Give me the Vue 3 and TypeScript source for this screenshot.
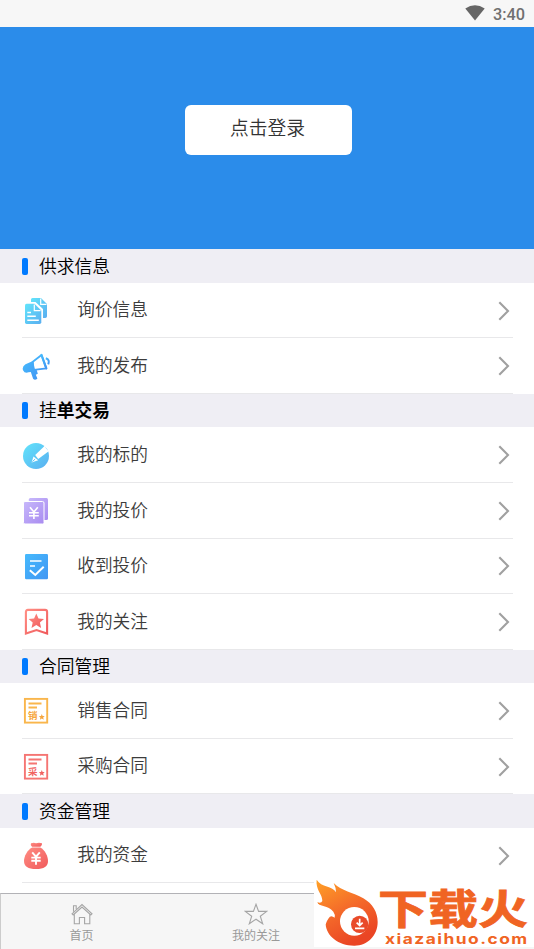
<script setup lang="ts">
type Icon =
  | 'docs' | 'horn' | 'pen' | 'bid' | 'check' | 'mark' | 'sale' | 'buy' | 'bag'

interface Row {
  icon: Icon
  label: string
}

interface Section {
  light: string
  bold?: string
  rows: Row[]
}

const sections: Section[] = [
  {
    light: '供求信息',
    rows: [
      { icon: 'docs', label: '询价信息' },
      { icon: 'horn', label: '我的发布' },
    ],
  },
  {
    light: '挂',
    bold: '单交易',
    rows: [
      { icon: 'pen', label: '我的标的' },
      { icon: 'bid', label: '我的投价' },
      { icon: 'check', label: '收到投价' },
      { icon: 'mark', label: '我的关注' },
    ],
  },
  {
    light: '合同管理',
    rows: [
      { icon: 'sale', label: '销售合同' },
      { icon: 'buy', label: '采购合同' },
    ],
  },
  {
    light: '资金管理',
    rows: [{ icon: 'bag', label: '我的资金' }],
  },
]
</script>

<template>
  <div class="screen">
    <svg class="defs" width="0" height="0">
      <defs>
        <linearGradient id="cyan" x1="0" y1="0" x2="1" y2="1">
          <stop offset="0" stop-color="#62e4fb" /><stop offset="1" stop-color="#5aaef0" />
        </linearGradient>
        <linearGradient id="blue" x1="0" y1="0" x2="1" y2="1">
          <stop offset="0" stop-color="#45bafd" /><stop offset="1" stop-color="#4296f3" />
        </linearGradient>
        <linearGradient id="violet" x1="0" y1="0" x2="1" y2="1">
          <stop offset="0" stop-color="#c7b8fb" /><stop offset="1" stop-color="#a98bf0" />
        </linearGradient>
        <linearGradient id="red" x1="0" y1="0" x2="1" y2="1">
          <stop offset="0" stop-color="#ff8d83" /><stop offset="1" stop-color="#f05a5c" />
        </linearGradient>
        <linearGradient id="fire" x1="0" y1="0" x2="0.5" y2="1">
          <stop offset="0" stop-color="#ffa126" /><stop offset="0.55" stop-color="#f4692a" /><stop offset="1" stop-color="#ea4524" />
        </linearGradient>
      </defs>
    </svg>

    <header class="status">
      <svg class="wifi" width="20" height="16" viewBox="0 0 20 16">
        <path d="M0.3 3.6Q10-3.2 19.7 3.6L10 15.6Z" fill="#666" />
      </svg>
      <span class="clock">3:40</span>
    </header>

    <div class="hero">
      <button class="login">点击登录</button>
    </div>

    <main>
      <section v-for="s in sections" :key="s.light">
        <h2><i class="tick"></i><span>{{ s.light }}<b v-if="s.bold">{{ s.bold }}</b></span></h2>
        <div v-for="r in s.rows" :key="r.label" class="row">
          <svg class="icon" width="28" height="28" viewBox="0 0 28 28">
            <g v-if="r.icon === 'docs'">
              <path d="M10.5 1H19L25 7V19.3Q25 21 23.3 21H21V12L13.5 5H9V2.5Q9 1 10.5 1Z" fill="url(#cyan)" />
              <path d="M18.7 1.5V7.3H24.5" fill="none" stroke="#fff" stroke-width="1.2" />
              <path d="M4.5 6.8H12.5L19.3 13.5V25.2Q19.3 27 17.5 27H4.5Q3 27 3 25.2V8.3Q3 6.8 4.5 6.8Z" fill="url(#cyan)" />
              <path d="M12.3 7.5V13.6H18.6" fill="none" stroke="#fff" stroke-width="1.2" />
              <path d="M5.3 15.5H9M5.3 19.3H13.8M5.3 23.2H16.8" stroke="#fff" stroke-width="1.6" />
            </g>
            <g v-else-if="r.icon === 'horn'">
              <path d="M10.5 9L19.5 2L24.3 15.4L12 16.8Z" fill="#fff" stroke="url(#blue)" stroke-width="1.8" stroke-linejoin="round" />
              <path d="M11.5 7.8L3.5 11.3Q-0.2 13.7 1 17.2Q2.8 20.7 6.5 19.3L8.8 19L11.1 25.8Q13 28 15.4 25.5L13.8 21.8L15.8 20.8L14.8 17.2L12.2 15.8Z" fill="url(#blue)" />
              <path d="M19.5 2L24.3 15.4" stroke="url(#blue)" stroke-width="2.2" stroke-linecap="round" />
              <path d="M23.8 5.2Q28 6.5 26.2 11.3" fill="none" stroke="url(#blue)" stroke-width="2" />
            </g>
            <g v-else-if="r.icon === 'pen'">
              <circle cx="14" cy="14" r="13" fill="url(#cyan)" />
              <path d="M22.3 4.2L13.2 13L16.2 17L26.7 9.2Z" fill="#fff" />
              <path d="M11.5 14.5L9.6 20.5L16.2 18.3Z" fill="#fff" />
              <path d="M10.4 19.6L13.2 17" stroke="#5fc4f5" />
              <path d="M26.5 1L28 8.5L21.8 4.4Z" fill="#fff" />
            </g>
            <g v-else-if="r.icon === 'bid'">
              <rect x="6.8" y="1" width="19.2" height="22" rx="1.5" fill="url(#violet)" />
              <rect x="1.5" y="4.5" width="20.5" height="22.5" rx="1.5" fill="url(#violet)" stroke="#fff" />
              <path d="M8 10.3L11.9 15L15.8 10.3M7 15.7H16.8M7 18.8H16.8M11.9 15V22" fill="none" stroke="#fff" stroke-width="1.6" />
            </g>
            <g v-else-if="r.icon === 'check'">
              <rect x="3" y="1" width="23" height="25.3" rx="1.2" fill="url(#blue)" />
              <path d="M8 8H19.5M8 13H13" stroke="#fff" stroke-width="1.6" />
              <path d="M7.8 17.3L13.3 22L21.7 13.8" fill="none" stroke="#fff" stroke-width="2" />
            </g>
            <g v-else-if="r.icon === 'mark'">
              <path d="M3.9 3.9Q3.9 1.9 5.9 1.9H23.1Q25.1 1.9 25.1 3.9V25.6L14.5 22L3.9 25.6Z" fill="none" stroke="url(#red)" stroke-width="2.1" />
              <path d="M14.3 5.4L16.5 10.4L22 10.9L17.9 14.5L19.1 19.9L14.3 17.1L9.5 19.9L10.7 14.5L6.6 10.9L12.1 10.4Z" fill="url(#red)" />
            </g>
            <g v-else-if="r.icon === 'sale' || r.icon === 'buy'" :class="r.icon">
              <rect x="2.9" y="1.9" width="22.3" height="23.7" fill="none" class="edge" stroke-width="1.9" />
              <path d="M6.5 6.5H19.5M6.5 10.5H15" class="edge" stroke-width="1.8" />
              <text x="6" y="21.8" class="stamp">{{ r.icon === 'sale' ? '销' : '采' }}</text>
              <path d="M19.8 17L20.6 18.9L22.7 19.1L21.2 20.5L21.7 22.7L19.8 21.5L17.9 22.7L18.4 20.5L16.9 19.1L19 18.9Z" class="star" />
            </g>
            <g v-else>
              <path d="M9 1.2Q12 .5 14 1.2Q17 .5 20 1.2Q20.5 3 18.4 4.8H10Q8 3 9 1.2Z" fill="url(#red)" />
              <path d="M10.2 5.6H18.2C23 8 26 14.5 26 19Q26 27 14 27Q2 27 2 19C2 14.5 5.4 8 10.2 5.6Z" fill="url(#red)" />
              <path d="M10.2 10.3L14 14.7L17.8 10.3M9.3 15.6H18.7M9.3 18.7H18.7M14 14.5V22.7" fill="none" stroke="#fff" stroke-width="1.9" />
            </g>
          </svg>
          <span class="label">{{ r.label }}</span>
          <svg class="arrow" width="12" height="20" viewBox="0 0 12 20">
            <path d="M1.3 1.3L10 10L1.3 18.7" fill="none" stroke="#a0a0a0" stroke-width="2.1" />
          </svg>
        </div>
      </section>
    </main>

    <nav class="tabs">
      <div class="tab">
        <svg width="22" height="22" viewBox="0 0 22 22" fill="none" stroke="#a5a5a5" stroke-width="1.1">
          <path d="M1 10.8L11 1.5L21 10.8L19.8 12L11 4L2.2 12Z" />
          <path d="M2.5 8.8V2.8H5.2V6.2M3.3 11.3V20.8H8.4V14.5H13.6V20.8H18.8V11.3" />
        </svg>
        <span>首页</span>
      </div>
      <div class="tab">
        <svg width="24" height="22" viewBox="0 0 24 22" fill="none" stroke="#a5a5a5" stroke-width="1.1">
          <path d="M12 1.3L14.6 8.4H22.7L16.3 13.2L18.7 20.8L12 16.2L5.3 20.8L7.7 13.2L1.3 8.4H9.4Z" />
        </svg>
        <span>我的关注</span>
      </div>
      <div class="tab"></div>
    </nav>

    <aside class="brand">
      <svg class="flame" width="66" height="70" viewBox="0 0 198 210">
        <path d="M8 8C22 32 56 26 66 46Q66 32 59 18C82 42 118 46 148 64C176 80 191 106 191 135C191 176 160 206 122 206C75 207 37 178 35 142C34 130 38 122 36 110C30 96 14 88 10 76Q22 80 25 72C26 52 4 38 8 8Z" fill="url(#fire)" />
        <path d="M5 74C18 92 42 82 58 104Q64 112 62 122Q50 112 44 124Q38 132 35 142L20 140Z" fill="#fff" />
        <circle cx="121" cy="133" r="43" fill="#fff" />
        <circle cx="137" cy="142" r="26" fill="#e94a29" />
        <path d="M137 125V144M128 137L137 146L146 137M123 154H151" fill="none" stroke="#fff" stroke-width="5" />
      </svg>
      <div class="words">
        <div class="name">下载火</div>
        <div class="site">xiazaihuo.com</div>
      </div>
    </aside>
  </div>
</template>

<style>
body {
  margin: 0;
  overflow: hidden;
}
</style>

<style scoped>
.screen {
  position: relative;
  display: flex;
  flex-direction: column;
  width: 534px;
  height: 949px;
  overflow: hidden;
  background: #fff;
  font-family: 'Noto Sans CJK SC', sans-serif;
  color: #3c3c3c;
}
.defs {
  position: absolute;
}
.status {
  display: flex;
  flex: none;
  align-items: center;
  justify-content: flex-end;
  gap: 8px;
  box-sizing: border-box;
  height: 27px;
  padding-right: 9px;
  background: #f7f7f7;
}
.wifi {
  margin-top: -2px;
}
.clock {
  padding-top: 2px;
  font: 500 16.3px/24px Roboto, sans-serif;
  color: #707070;
}
.hero {
  display: flex;
  flex: none;
  justify-content: center;
  box-sizing: border-box;
  height: 222.4px;
  padding: 78px 0 0 2px;
  background: #2b8cea;
}
.login {
  width: 167px;
  height: 50px;
  padding: 0 1px 6px 0;
  border: 0;
  border-radius: 6px;
  background: #fff;
  font: 350 18.8px/44px 'Noto Sans CJK SC', sans-serif;
  color: #333;
}
main {
  flex: 1;
  min-height: 0;
  overflow: hidden;
}
h2 {
  display: flex;
  align-items: center;
  gap: 11px;
  height: 33.4px;
  margin: 0;
  padding-left: 22px;
  background: #efeef4;
  font-size: 17.8px;
  font-weight: 350;
  line-height: 33px;
  color: #000;
}
h2 span {
  margin-top: -1.6px;
}
h2 b {
  font-weight: 700;
}
.tick {
  width: 6px;
  height: 17px;
  border-radius: 2px;
  background: #007aff;
}
.row {
  display: flex;
  align-items: center;
  box-sizing: border-box;
  height: 55.6px;
  margin: 0 21px 0 22px;
  border-bottom: 1.5px solid #e8e8ea;
}
.icon {
  flex: none;
  margin-top: 1.8px;
}
.label {
  flex: 1;
  margin: -3.2px 0 0 27.2px;
  font-size: 17.7px;
  font-weight: 350;
  line-height: 26px;
}
.arrow {
  margin: 1.2px 3px 0 0;
}
.stamp {
  font-size: 9.5px;
  font-weight: 700;
}
.sale .edge {
  stroke: #f9b64c;
}
.sale .star,
.sale .stamp {
  fill: #f6a640;
}
.buy .edge {
  stroke: #f57573;
}
.buy .star,
.buy .stamp {
  fill: #f16362;
}
.tabs {
  display: grid;
  flex: none;
  grid-template-columns: 161px 188px 1fr;
  box-sizing: border-box;
  height: 56px;
  border-top: 1.5px solid #b2b2b6;
  border-left: 1px solid #ccc;
  background: #f6f6f6;
}
.tab {
  display: flex;
  flex-direction: column;
  align-items: center;
  padding-top: 9px;
  font-size: 12px;
  line-height: 20.6px;
  color: #999;
}
.brand {
  position: absolute;
  top: 877px;
  left: 314px;
  display: flex;
  width: 220px;
  height: 70px;
  background: #fff;
}
.flame {
  flex: none;
}
.words {
  color: #f06423;
}
.name {
  height: 55px;
  margin-left: -2px;
  font-size: 50px;
  font-weight: 700;
  line-height: 59px;
  white-space: nowrap;
  transform: scaleY(0.81);
  -webkit-text-stroke: 1px #f06423;
}
.site {
  width: 124px;
  margin-left: 5px;
  font: 700 14px/14px Inter, sans-serif;
  letter-spacing: 1.2px;
  transform: scaleX(1.24);
  transform-origin: left;
}
</style>
